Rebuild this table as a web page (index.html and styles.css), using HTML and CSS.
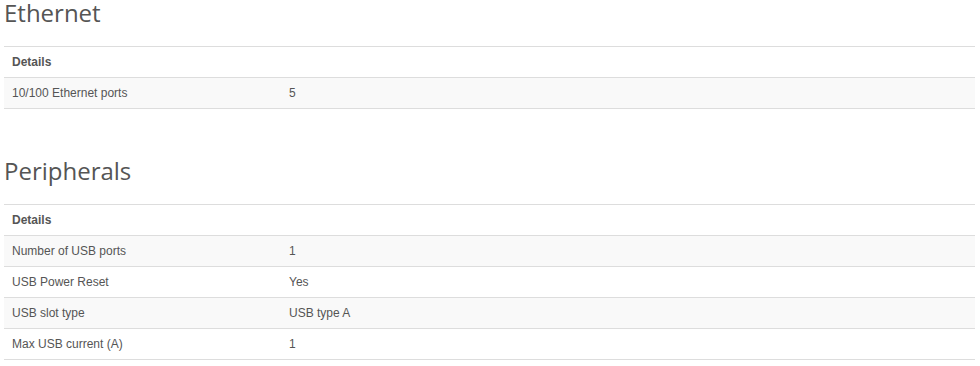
FILE: index.html
```html
<!DOCTYPE html>
<html>
<head>
<meta charset="utf-8">
<link rel="stylesheet" href="styles.css">
</head>
<body>
<div class="page">
  <section class="spec">
    <h2 class="spec-title">Ethernet</h2>
    <table class="spec-table">
      <thead><tr><th colspan="2">Details</th></tr></thead>
      <tbody>
        <tr><td class="label">10/100 Ethernet ports</td><td>5</td></tr>
      </tbody>
    </table>
  </section>
  <section class="spec">
    <h2 class="spec-title">Peripherals</h2>
    <table class="spec-table">
      <thead><tr><th colspan="2">Details</th></tr></thead>
      <tbody>
        <tr><td class="label">Number of USB ports</td><td>1</td></tr>
        <tr><td class="label">USB Power Reset</td><td>Yes</td></tr>
        <tr><td class="label">USB slot type</td><td>USB type A</td></tr>
        <tr><td class="label">Max USB current (A)</td><td>1</td></tr>
      </tbody>
    </table>
  </section>
</div>
</body>
</html>
```
FILE: styles.css
```css
html, body {
  margin: 0;
  padding: 0;
  background: #fff;
}
.page {
  padding: 0 5px 0 4px;
  display: flex;
  flex-direction: column;
  gap: 49px;
}
.spec-title {
  margin: 0 0 20px 0;
  font-family: "Open Sans", sans-serif;
  font-weight: 400;
  font-size: 24px;
  line-height: 26px;
  color: #555;
}
.spec-table {
  width: 100%;
  border-collapse: collapse;
  font-family: "Liberation Sans", Arial, sans-serif;
  font-size: 12px;
  line-height: 14px;
  color: #555;
  border-bottom: 1px solid #ddd;
}
.spec-table th,
.spec-table td {
  text-align: left;
  padding: 8px;
  border-top: 1px solid #ddd;
  vertical-align: top;
}
.spec-table th {
  font-weight: bold;
}
.spec-table td.label {
  width: 261px;
}
.spec-table tbody tr:nth-child(odd) {
  background: #f9f9f9;
}
```
